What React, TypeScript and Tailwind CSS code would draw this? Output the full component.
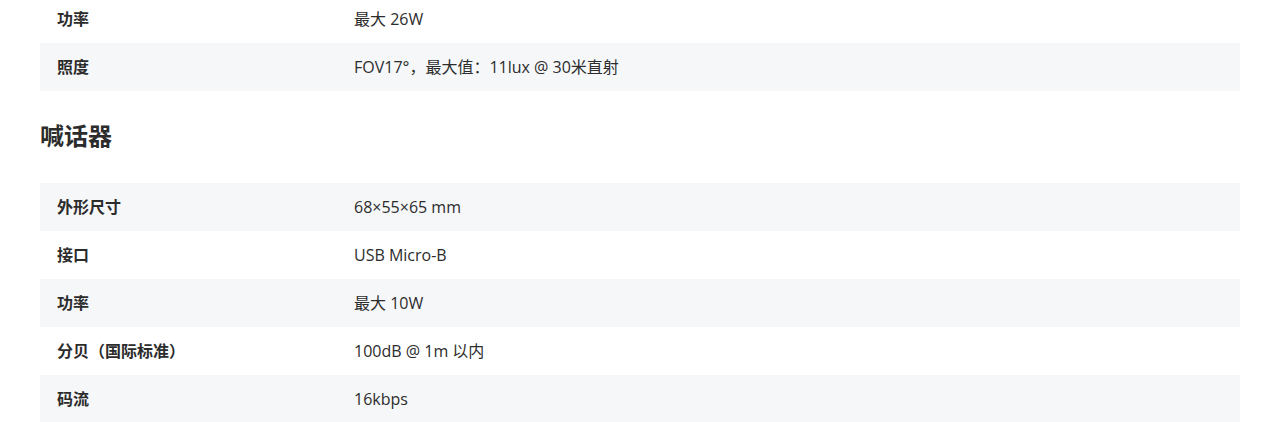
import React from "react";

const font = { fontFamily: '"Open Sans", "Noto Sans CJK SC", "Noto Sans", sans-serif' };

function Row({ label, value, striped }: { label: string; value: string; striped?: boolean }) {
  return (
    <div className={`flex h-12 items-center pl-[17px] ${striped ? "bg-[#f6f7f9]" : "bg-white"}`}>
      <div className="w-[297px] shrink-0 text-[16px] font-bold text-[#2c2c2c]">{label}</div>
      <div className="text-[16px] text-[#2c2c2c]">{value}</div>
    </div>
  );
}

export default function App() {
  return (
    <div className="h-[422px] overflow-hidden bg-white" style={font}>
      <div className="-mt-[5px] px-10">
        <Row label="功率" value="最大 26W" />
        <Row label="照度" value="FOV17°，最大值：11lux @ 30米直射" striped />
        <h2 className="pt-[29px] pb-[31px] text-[24px] font-bold leading-8 text-[#2c2c2c]">喊话器</h2>
        <Row label="外形尺寸" value="68×55×65 mm" striped />
        <Row label="接口" value="USB Micro-B" />
        <Row label="功率" value="最大 10W" striped />
        <Row label="分贝（国际标准）" value="100dB @ 1m 以内" />
        <Row label="码流" value="16kbps" striped />
      </div>
    </div>
  );
}
